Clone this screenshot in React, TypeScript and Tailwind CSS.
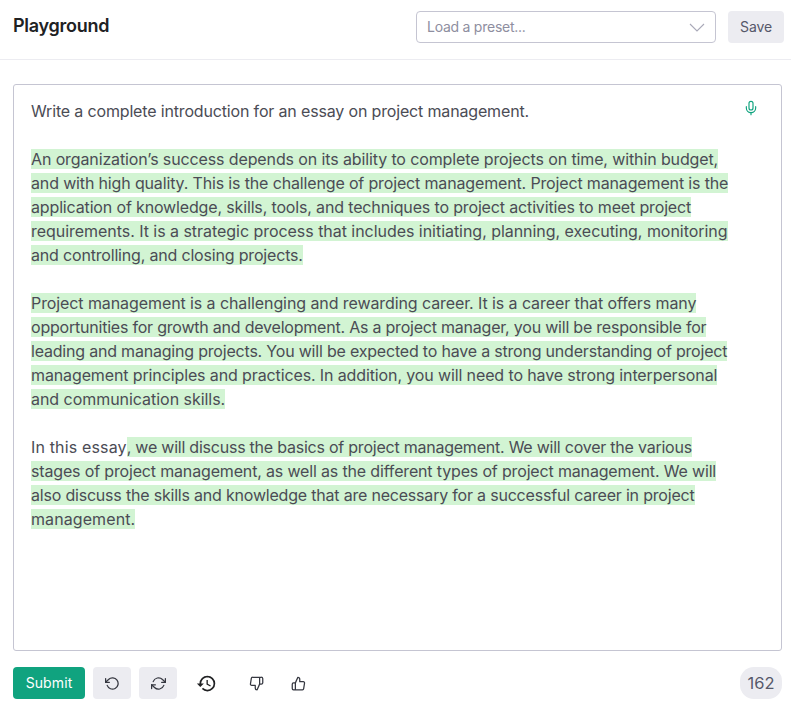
import { Mic } from "lucide-react";
import { MdHistory } from "react-icons/md";

const paragraphs = [
  [
    ["An organization’s success depends on its ability to complete projects on time, within budget,", "tracking-[-0.12px]"],
    ["and with high quality. This is the challenge of project management. Project management is the", "tracking-[-0.15px]"],
    ["application of knowledge, skills, tools, and techniques to project activities to meet project", "tracking-[-0.15px]"],
    ["requirements. It is a strategic process that includes initiating, planning, executing, monitoring", "tracking-[-0.04px]"],
    ["and controlling, and closing projects.", "tracking-[-0.18px]"],
  ],
  [
    ["Project management is a challenging and rewarding career. It is a career that offers many", "tracking-[-0.09px]"],
    ["opportunities for growth and development. As a project manager, you will be responsible for", "tracking-[-0.215px]"],
    ["leading and managing projects. You will be expected to have a strong understanding of project", "tracking-[-0.2px]"],
    ["management principles and practices. In addition, you will need to have strong interpersonal", "tracking-[-0.12px]"],
    ["and communication skills.", "tracking-[-0.04px]"],
  ],
];

const lastParagraph = [
  ["stages of project management, as well as the different types of project management. We will", "tracking-[-0.16px]"],
  ["also discuss the skills and knowledge that are necessary for a successful career in project", "tracking-[-0.2px]"],
  ["management.", "tracking-[0.09px]"],
];

const Line = ({ text, track }: { text: string; track: string }) => (
  <div className={"h-6 whitespace-nowrap " + track}>
    <span className="bg-[#d2f4d3]">{text}</span>
  </div>
);

const Icon = ({ size = 16, className, children }: { size?: number; className?: string; children: React.ReactNode }) => (
  <svg
    width={size}
    height={size}
    viewBox="0 0 24 24"
    fill="none"
    stroke="currentColor"
    strokeWidth="2"
    strokeLinecap="round"
    strokeLinejoin="round"
    className={className}
  >
    {children}
  </svg>
);

const App = () => {
  return (
    <div className="w-[791px] h-[703px] bg-white overflow-hidden font-['Inter',sans-serif] text-[#353740]">
      <header className="h-[60px] border-b border-[#ececf1] flex items-start pt-[11px] pl-[13px] pr-[7px]">
        <h1 className="h-8 leading-[30px] text-[18px] tracking-[-0.25px] font-semibold flex-1 text-[#202123]">Playground</h1>
        <div className="w-[300px] h-8 border border-[#c5c5d2] rounded flex items-center justify-between pl-[10px] pr-[10px] text-sm tracking-[-0.25px] text-[#8e8ea0]">
          <span>Load a preset...</span>
          <svg width="16" height="9" viewBox="0 0 16 9" fill="none" stroke="#a9a9b8" strokeWidth="1.1">
            <path d="M1 1l7 7 7-7" />
          </svg>
        </div>
        <button className="ml-3 w-14 h-8 bg-[#ececf1] rounded text-sm tracking-[-0.1px] text-[#565869]">Save</button>
      </header>

      <main className="pl-[13px] pr-[9px] pt-6">
        <div className="relative h-[567px] border border-[#c5c5d2] rounded-[3px] pl-[17px] pt-[14px] text-[16px] leading-6 text-[#4b4c55]">
          <Mic size={16} strokeWidth={1.75} className="absolute top-[15px] right-[22px] text-[#10a37f]" />
          <div className="tracking-[-0.16px]">Write a complete introduction for an essay on project management.</div>
          <div className="h-6" />
          {paragraphs.map((lines, i) => (
            <div key={i} className="mb-6">
              {lines.map(([l, t]) => (
                <Line key={l} text={l} track={t} />
              ))}
            </div>
          ))}
          <div className="h-6 whitespace-nowrap">
            <span className="tracking-[0.15px]">In this essay</span>
            <span className="bg-[#d2f4d3] tracking-[-0.23px]">, we will discuss the basics of project management. We will cover the various</span>
          </div>
          {lastParagraph.map(([l, t]) => (
            <Line key={l} text={l} track={t} />
          ))}
        </div>

        <div className="mt-4 flex items-center h-8">
          <button className="w-[72px] h-8 rounded bg-[#10a37f] text-white text-sm tracking-[0.1px]">Submit</button>
          <button className="ml-2 w-[38px] h-8 rounded bg-[#ececf1] flex items-center justify-center text-[#353740]">
            <Icon size={15}>
              <polyline points="1 4 1 10 7 10" />
              <path d="M3.51 15a9 9 0 1 0 2.13-9.36L1 10" />
            </Icon>
          </button>
          <button className="ml-2 w-[38px] h-8 rounded bg-[#ececf1] flex items-center justify-center text-[#353740]">
            <Icon size={15}>
              <polyline points="23 4 23 10 17 10" />
              <polyline points="1 20 1 14 7 14" />
              <path d="M3.51 9a9 9 0 0 1 14.85-3.36L23 10M1 14l4.64 4.36A9 9 0 0 0 20.49 15" />
            </Icon>
          </button>
          <MdHistory size={21} className="ml-[19px] text-[#202123]" />
          <Icon size={15} className="ml-[32px]">
            <path d="M10 15v4a3 3 0 0 0 3 3l4-9V2H5.72a2 2 0 0 0-2 1.7l-1.38 9a2 2 0 0 0 2 2.3zm7-13h2.67A2.31 2.31 0 0 1 22 4v7a2.31 2.31 0 0 1-2.33 2H17" />
          </Icon>
          <Icon size={15} className="ml-[27px]">
            <path d="M14 9V5a3 3 0 0 0-3-3l-4 9v11h11.28a2 2 0 0 0 2-1.7l1.38-9a2 2 0 0 0-2-2.3zM7 22H4a2 2 0 0 1-2-2v-7a2 2 0 0 1 2-2h3" />
          </Icon>
          <div className="ml-auto w-[42px] h-8 rounded-[14px] bg-[#ececf1] flex items-center justify-center text-[16.5px] text-[#565869]">162</div>
        </div>
      </main>
    </div>
  );
};

export default App;
